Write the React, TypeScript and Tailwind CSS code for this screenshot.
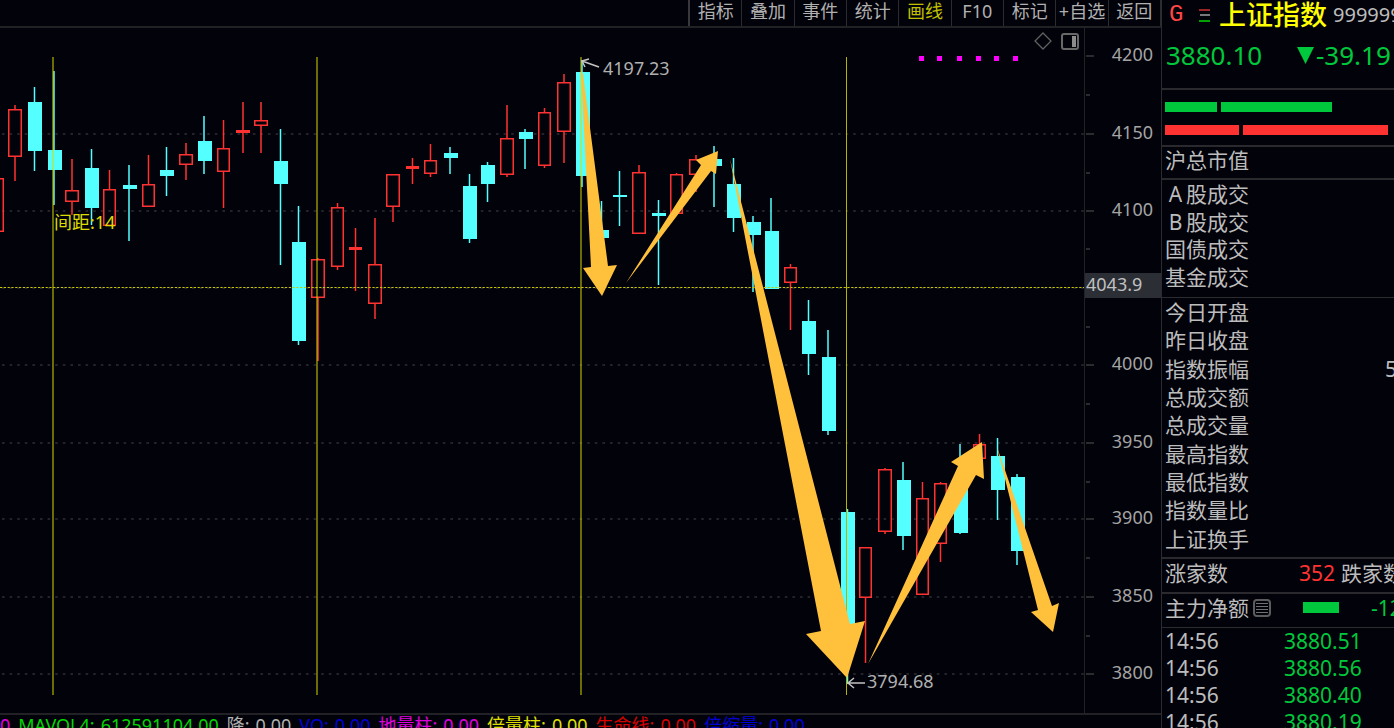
import { useState } from "react";

type Candle = {
  up: boolean
  left: number
  right: number
  wick: number
  top: number
  bottom: number
  high: number
  low: number
}

const candle = (up: boolean, left: number, right: number, wick: number, top: number, bottom: number, high: number, low: number): Candle => (
  { up, left, right, wick, top, bottom, high, low }
)

const candles: Candle[] = [
  candle(true, -9, 4, -3, 178, 232, 178, 232),
  candle(true, 8, 22, 15, 109, 157, 105, 181),
  candle(false, 28, 42, 34.5, 102, 151, 87, 171),
  candle(false, 48, 62, 54, 150, 170, 71, 205),
  candle(true, 65, 79, 72, 190, 202, 159, 215),
  candle(false, 85, 99, 91.5, 168, 208, 149, 225),
  candle(true, 103, 116, 109.5, 189, 226, 170, 226),
  candle(false, 123, 137, 129, 185, 189, 165, 241),
  candle(true, 142, 155, 148.5, 184, 207, 155, 207),
  candle(false, 160, 174, 166.5, 170, 176, 147, 196),
  candle(true, 179, 193, 186, 154, 165, 143, 180),
  candle(false, 198, 212, 204, 141, 161, 116, 174),
  candle(true, 217, 230, 223.5, 148, 172, 120, 208),
  candle(true, 236, 250, 243, 130, 133, 102, 153),
  candle(true, 254, 268, 261, 120, 126, 102, 153),
  candle(false, 274, 288, 280.5, 161, 184, 129, 265),
  candle(false, 292, 306, 298.5, 242, 341, 206, 345),
  candle(true, 311, 325, 318, 259, 298, 258, 361),
  candle(true, 331, 344, 337.5, 207, 267, 203, 270),
  candle(true, 349, 362, 355.5, 247, 250, 228, 291),
  candle(true, 368, 382, 375, 264, 304, 218, 319),
  candle(true, 386, 400, 393, 174, 207, 174, 222),
  candle(true, 406, 419, 412.5, 166, 169, 158, 184),
  candle(true, 424, 437, 430.5, 160, 174, 144, 177),
  candle(false, 444, 458, 450, 153, 158, 147, 174),
  candle(false, 463, 477, 469.5, 186, 239, 174, 243),
  candle(false, 481, 495, 487.5, 165, 184, 162, 202),
  candle(true, 500, 514, 507, 138, 175, 105, 177),
  candle(false, 519, 533, 525, 132, 139, 129, 169),
  candle(true, 538, 551, 544.5, 112, 166, 108, 168),
  candle(true, 557, 571, 564, 82, 132, 74, 163),
  candle(false, 576, 590, 582, 72, 176, 60, 187),
  candle(false, 595, 609, 601.5, 230, 238, 201, 238),
  candle(false, 613, 627, 619.5, 195, 197, 171, 226),
  candle(true, 632, 646, 639, 172, 234, 165, 234),
  candle(false, 652, 666, 658.5, 213, 216, 200, 285),
  candle(true, 670, 683, 676.5, 174, 214, 173, 214),
  candle(true, 689, 703, 696, 159, 175, 155, 192),
  candle(false, 708, 722, 714, 159, 166, 146, 207),
  candle(false, 727, 741, 733.5, 184, 218, 158, 232),
  candle(false, 747, 761, 753, 222, 235, 216, 292),
  candle(false, 765, 779, 771, 231, 289, 198, 289),
  candle(true, 784, 797, 790.5, 267, 283, 264, 330),
  candle(false, 802, 816, 808.5, 321, 354, 300, 375),
  candle(false, 822, 836, 828, 357, 431, 330, 435),
  candle(false, 841, 855, 847.5, 512, 624, 509, 684),
  candle(true, 859, 872, 865.5, 547, 598, 547, 663),
  candle(true, 878, 892, 885, 469, 532, 468, 534),
  candle(false, 897, 911, 903, 480, 536, 462, 550),
  candle(true, 916, 929, 922.5, 498, 595, 482, 595),
  candle(true, 934, 947, 940.5, 483, 544, 482, 562),
  candle(false, 954, 968, 960, 483, 533, 444, 534),
  candle(true, 973, 986, 979.5, 444, 459, 434, 459),
  candle(false, 991, 1005, 997.5, 456, 490, 438, 520),
  candle(false, 1011, 1025, 1017, 477, 551, 474, 565),
]

const prices = [
  { y: 56, label: "4200" },
  { y: 134, label: "4150" },
  { y: 211, label: "4100" },
  { y: 365, label: "4000" },
  { y: 443, label: "3950" },
  { y: 519, label: "3900" },
  { y: 597, label: "3850" },
  { y: 674, label: "3800" },
]
const gridLines = [134, 211, 288, 365, 443, 519, 597, 674]
const minorTicks = [95, 173, 249, 327, 404, 482, 558, 636]

const arrows = [
  "581,71 583,74 608,266 617,265 602,296 583,268 591,267",
  "626,283 701,165 696,160 718,151 716,174 711,171",
  "730,159 850,624 865,621 847,678 806,634 821,631",
  "868,664 958,466 951,462 982,442 984,479 976,475",
  "997,447 1052,606 1059,603 1053,632 1031,612 1038,610",
]

const tools = ["指标", "叠加", "事件", "统计", "画线", "F10", "标记", "+自选", "返回"]

const indicators = [
  { name: "MAVOL4:", value: "612591104.00", color: "text-[#00d800]" },
  { name: "降:", value: "0.00", color: "text-[#b0b0b0]" },
  { name: "VO:", value: "0.00", color: "text-[#0000d8]" },
  { name: "地量柱:", value: "0.00", color: "text-[#e000e0]" },
  { name: "倍量柱:", value: "0.00", color: "text-[#e0e000]" },
  { name: "生命线:", value: "0.00", color: "text-[#d80000]" },
  { name: "倍缩量:", value: "0.00", color: "text-[#0000d8]" },
]

const turnover = ["A股成交", "B股成交", "国债成交", "基金成交"]
const quotes = ["今日开盘", "昨日收盘", "指数振幅", "总成交额", "总成交量", "最高指数", "最低指数", "指数量比", "上证换手"]
const ticks = ["3880.51", "3880.56", "3880.40", "3880.19"]

function CandleShape({ item }: { item: Candle }) {
  const { up, left, right, wick, top, bottom, high, low } = item
  if (!up) {
    return (
      <g>
        <path d={`M${wick} ${high}V${low}`} stroke="#54ffff" strokeWidth="1.5" />
        <rect x={left} y={top} width={right - left} height={bottom - top} fill="#54ffff" />
      </g>
    )
  }
  return (
    <g fill="none" stroke="#ff3232" strokeWidth="1.5">
      <path d={`M${wick} ${high}V${top}M${wick} ${bottom}V${low}`} />
      <rect
        x={left + 0.75}
        y={top + 0.75}
        width={right - left - 1.5}
        height={bottom - top - 1.5}
        fill={bottom - top < 4 ? "#ff3232" : "none"}
      />
    </g>
  )
}

function Chart() {
  return (
    <svg viewBox="0 28 1161 685" className="block w-full" role="img" aria-label="上证指数 K线">
      {gridLines.map((y) => (
        <path key={y} d={`M2 ${y}H1085`} stroke="#2e2e33" strokeWidth="1.5" strokeDasharray="2.6 5" />
      ))}
      {candles.map((item, index) => (
        <CandleShape key={index} item={item} />
      ))}
      <path d="M0 287.5H1085" stroke="#c8c800" strokeDasharray="2.2 1.6" />
      <path d="M53 57V695M317 57V695M581 57V695" stroke="#dcdc00" strokeOpacity="0.75" strokeWidth="1.3" />
      <path d="M846.5 57V695" stroke="#b4b400" />
      <text x="54" y="229" fontSize="18" fill="#dcdc00">间距:14</text>

      <g fill="#ff00ff">
        {[919, 937, 957, 976, 994, 1013].map((x) => (
          <rect key={x} x={x} y="56" width="5" height="5" />
        ))}
      </g>

      {arrows.map((points) => (
        <polygon key={points} points={points} fill="#ffc03c" />
      ))}

      <g stroke="#c4c4c4" strokeWidth="1.5" fill="none">
        <path d="M599 67L582 61M589 59L582 61L585 67" />
        <path d="M865 683H848M854 678L848 683L854 688" />
      </g>
      <g fontSize="18" fill="#b0b0b0">
        <text x="603" y="75">4197.23</text>
        <text x="867" y="688">3794.68</text>
      </g>

      <path d="M1084.5 28V713" stroke="#222226" />
      {minorTicks.map((y) => (
        <path key={y} d={`M1086 ${y}h4`} stroke="#38383c" strokeWidth="1.5" />
      ))}
      {prices.map(({ y, label }) => (
        <g key={label}>
          <path d={`M1086 ${y}h8`} stroke="#38383c" strokeWidth="1.5" />
          <text x="1153" y={y + 5} textAnchor="end" fontSize="18" fill="#a4a4a4">{label}</text>
        </g>
      ))}
      <rect x="1085" y="273" width="76" height="25" fill="#2b2e35" />
      <text x="1086" y="291" fontSize="18" fill="#c0c0c0">4043.9</text>
    </svg>
  )
}

function Label({ text }: { text: string }) {
  // single latin letters take a full character cell
  const latin = /^[AB]/.test(text)
  return (
    <div className="flex items-center">
      {latin && <span className="w-[21px] text-center">{text[0]}</span>}
      <span>{latin ? text.slice(1) : text}</span>
    </div>
  )
}

function Sidebar() {
  return (
    <aside className="w-[233px] shrink-0 overflow-hidden whitespace-nowrap border-l border-[#2c2c30] text-[21px] leading-[26px] text-[#bcbcbc]">
      <header className="h-[90px] border-b-2 border-[#2a2a2e] pl-1">
        <div className="flex h-[30px] items-center">
          <span className="w-[33px] shrink-0 pl-[3px] font-['Liberation_Mono'] text-[24px] text-[#ff4646]">G</span>
          <svg className="h-4 w-3 shrink-0" viewBox="0 0 12 16" strokeWidth="1.5">
            <path d="M0 3H11" stroke="#d03030" />
            <path d="M1 8H11" stroke="#a0a0a0" />
            <path d="M0 14H11" stroke="#00d800" />
          </svg>
          <h1 className="ml-2 text-[27px] font-medium leading-[30px] text-[#ffff00]">上证指数</h1>
          <span className="ml-1.5 text-[20px]">999999</span>
        </div>
        <div className="flex h-[50px] items-center text-[26px] text-[#00c83c]">
          <span className="w-[131px]">3880.10</span>
          <svg className="h-[17px] w-[17px] shrink-0" viewBox="0 0 17 17"><path d="M0 0H17L8.5 17Z" fill="currentColor" /></svg>
          <span className="ml-0.5">-39.19</span>
        </div>
      </header>
      <div className="flex h-[57px] flex-col gap-[13px] border-b-2 border-[#2a2a2e] pl-[3px] pt-3">
        <div className="flex gap-1">
          <div className="h-[10px] w-[52px] bg-[#00c83c]" />
          <div className="h-[10px] w-[111px] bg-[#00c83c]" />
        </div>
        <div className="flex gap-1">
          <div className="h-[10px] w-[74px] bg-[#ff3232]" />
          <div className="h-[10px] w-[145px] bg-[#ff3232]" />
        </div>
      </div>
      <div className="flex h-[33px] items-center border-b-2 border-[#2a2a2e] pb-1.5 pl-[3px]">沪总市值</div>
      <div className="grid h-[118px] auto-rows-fr border-b border-[#2c2c30] pb-1.5 pl-[3px]">
        {turnover.map((text) => <Label key={text} text={text} />)}
      </div>
      <div className="grid h-[261px] auto-rows-fr border-b-2 border-[#2a2a2e] pb-1 pl-[3px]">
        {quotes.map((text) => (
          <div key={text} className="flex items-center justify-between">
            <Label text={text} />
            {text === "指数振幅" && <span className="w-[9px]">5</span>}
          </div>
        ))}
      </div>
      <div className="flex h-[35px] items-center border-b-2 border-[#2a2a2e] pb-1.5 pl-[3px]">
        <span className="w-[134px] shrink-0">涨家数</span>
        <span className="text-[#ff3232]">352</span>
        <span className="ml-1.5">跌家数</span>
      </div>
      <div className="flex h-[34px] items-center border-b border-[#2c2c30] pb-1.5 pl-[3px]">
        <span>主力净额</span>
        <svg className="ml-1 h-[18px] w-[18px] shrink-0" viewBox="0 0 18 18" fill="none" stroke="#707070">
          <rect x="1" y="1" width="16" height="16" rx="3" strokeWidth="2" stroke="#5c5c5c" />
          <path d="M3 4.5H15M3 7.5H15M3 10.5H15M3 13.5H15" strokeWidth="1.2" />
        </svg>
        <div className="ml-8 h-[11px] w-[36px] shrink-0 bg-[#00c83c]" />
        <span className="ml-8 text-[#00c83c]">-12</span>
      </div>
      <table className="leading-[27px]">
        <tbody className="align-top">
          {ticks.map((price) => (
            <tr key={price}>
              <td className="w-[122px] p-0 pl-[3px]">14:56</td>
              <td className="p-0 text-[#00c83c]">{price}</td>
            </tr>
          ))}
        </tbody>
      </table>
    </aside>
  )
}

export default function App() {
  const [active, setActive] = useState("画线")

  return (
    <div className="flex h-screen overflow-hidden bg-[#02020a] font-['Noto_Sans','Noto_Sans_CJK_SC',sans-serif]">
      <main className="min-w-0 flex-1">
        <nav className="flex h-7 justify-end border-b-2 border-[#222226]">
          <div className="grid w-[473px] grid-cols-9 border-l-2 border-[#38383c]">
            {tools.map((tool) => (
              <button
                key={tool}
                onClick={() => setActive(tool)}
                className={`flex items-center justify-center whitespace-nowrap border-r border-[#2c2c30] pb-1 text-[18px] leading-[22px] ${active === tool ? "text-[#c0c000]" : "text-[#b0b0b0]"}`}
              >
                {tool}
              </button>
            ))}
          </div>
        </nav>
        <div className="relative">
          <Chart />
          <div className="absolute right-[81px] top-1 flex gap-2">
            <button aria-label="标记点">
              <svg className="h-[18px] w-[18px]" viewBox="0 0 18 18" fill="none" stroke="#606060" strokeWidth="1.3">
                <path d="M9 1L17 9L9 17L1 9Z" />
              </svg>
            </button>
            <button aria-label="侧栏">
              <svg className="h-[18px] w-5" viewBox="0 0 20 18" fill="none">
                <rect x="2" y="2" width="16" height="15" rx="2" stroke="#686868" strokeWidth="2" />
                <rect x="12" y="4" width="4" height="11" fill="#8c8c8c" />
              </svg>
            </button>
          </div>
        </div>
        <div className="flex gap-2 overflow-hidden whitespace-nowrap border-t-2 border-[#222226] text-[18px] leading-5">
          <span className="text-[#e000e0]">0</span>
          {indicators.map(({ name, value, color }) => (
            <span key={name} className={`flex gap-1.5 ${color}`}>
              <span>{name}</span>
              <span>{value}</span>
            </span>
          ))}
        </div>
      </main>
      <Sidebar />
    </div>
  )
}
